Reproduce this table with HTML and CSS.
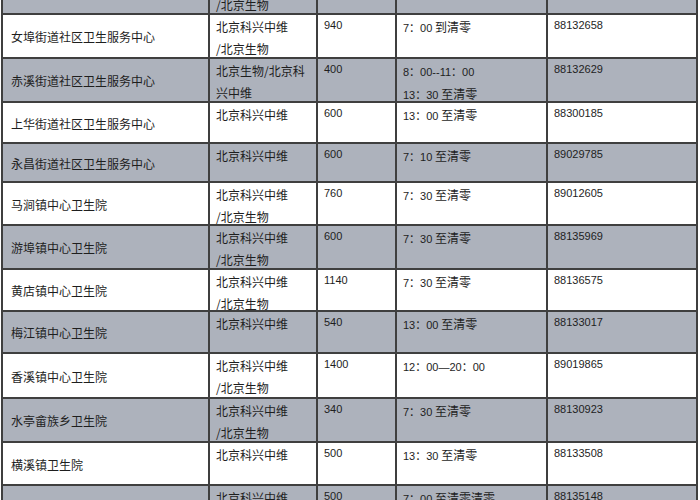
FILE: index.html
```html
<!DOCTYPE html>
<html lang="zh">
<head>
<meta charset="utf-8">
<title>接种点</title>
<link rel="stylesheet" href="styles.css">
</head>
<body>
<table class="sites">
  <colgroup>
    <col class="c-name"><col class="c-vac"><col class="c-num"><col class="c-time"><col class="c-tel">
  </colgroup>
  <tbody>
    <tr class="gray h44">
      <td class="name"></td>
      <td><div class="t">北京科兴中维<br>/北京生物</div></td>
      <td class="num"></td>
      <td></td>
      <td class="num"></td>
    </tr>
    <tr class="h44">
      <td class="name">女埠街道社区卫生服务中心</td>
      <td><div class="t">北京科兴中维<br>/北京生物</div></td>
      <td class="num"><div class="t">940</div></td>
      <td><div class="t"><span class="d">7：00</span> 到清零</div></td>
      <td class="num"><div class="t">88132658</div></td>
    </tr>
    <tr class="gray h44">
      <td class="name">赤溪街道社区卫生服务中心</td>
      <td><div class="t">北京生物/北京科<br>兴中维</div></td>
      <td class="num"><div class="t">400</div></td>
      <td><div class="t"><span class="d">8：00--11：00</span><br><span class="d">13：30</span> 至清零</div></td>
      <td class="num"><div class="t">88132629</div></td>
    </tr>
    <tr class="h41">
      <td class="name">上华街道社区卫生服务中心</td>
      <td><div class="t">北京科兴中维</div></td>
      <td class="num"><div class="t">600</div></td>
      <td><div class="t"><span class="d">13：00</span> 至清零</div></td>
      <td class="num"><div class="t">88300185</div></td>
    </tr>
    <tr class="gray h39">
      <td class="name">永昌街道社区卫生服务中心</td>
      <td><div class="t">北京科兴中维</div></td>
      <td class="num"><div class="t">600</div></td>
      <td><div class="t"><span class="d">7：10</span> 至清零</div></td>
      <td class="num"><div class="t">89029785</div></td>
    </tr>
    <tr class="h43">
      <td class="name">马涧镇中心卫生院</td>
      <td><div class="t">北京科兴中维<br>/北京生物</div></td>
      <td class="num"><div class="t">760</div></td>
      <td><div class="t"><span class="d">7：30</span> 至清零</div></td>
      <td class="num"><div class="t">89012605</div></td>
    </tr>
    <tr class="gray h44">
      <td class="name">游埠镇中心卫生院</td>
      <td><div class="t">北京科兴中维<br>/北京生物</div></td>
      <td class="num"><div class="t">600</div></td>
      <td><div class="t"><span class="d">7：30</span> 至清零</div></td>
      <td class="num"><div class="t">88135969</div></td>
    </tr>
    <tr class="h42">
      <td class="name">黄店镇中心卫生院</td>
      <td><div class="t">北京科兴中维<br>/北京生物</div></td>
      <td class="num"><div class="t">1140</div></td>
      <td><div class="t"><span class="d">7：30</span> 至清零</div></td>
      <td class="num"><div class="t">88136575</div></td>
    </tr>
    <tr class="gray h42">
      <td class="name">梅江镇中心卫生院</td>
      <td><div class="t">北京科兴中维</div></td>
      <td class="num"><div class="t">540</div></td>
      <td><div class="t"><span class="d">13：00</span> 至清零</div></td>
      <td class="num"><div class="t">88133017</div></td>
    </tr>
    <tr class="h45">
      <td class="name">香溪镇中心卫生院</td>
      <td><div class="t">北京科兴中维<br>/北京生物</div></td>
      <td class="num"><div class="t">1400</div></td>
      <td><div class="t"><span class="d">12：00—20：00</span></div></td>
      <td class="num"><div class="t">89019865</div></td>
    </tr>
    <tr class="gray h44">
      <td class="name">水亭畲族乡卫生院</td>
      <td><div class="t">北京科兴中维<br>/北京生物</div></td>
      <td class="num"><div class="t">340</div></td>
      <td><div class="t"><span class="d">7：30</span> 至清零</div></td>
      <td class="num"><div class="t">88130923</div></td>
    </tr>
    <tr class="h43">
      <td class="name">横溪镇卫生院</td>
      <td><div class="t">北京科兴中维</div></td>
      <td class="num"><div class="t">500</div></td>
      <td><div class="t"><span class="d">13：30</span> 至清零</div></td>
      <td class="num"><div class="t">88133508</div></td>
    </tr>
    <tr class="gray h44">
      <td class="name"></td>
      <td><div class="t">北京科兴中维<br>/北京生物</div></td>
      <td class="num"><div class="t">500</div></td>
      <td><div class="t"><span class="d">7：00</span> 至清零清零</div></td>
      <td class="num"><div class="t">88135148</div></td>
    </tr>
  </tbody>
</table>
</body>
</html>
```
FILE: styles.css
```css
html, body {
  margin: 0;
  padding: 0;
  background: #ffffff;
  overflow: hidden;
}

body {
  font-family: "Noto Sans CJK SC", "Liberation Sans", sans-serif;
  color: #1e1e1e;
}

.sites {
  border-collapse: collapse;
  table-layout: fixed;
  width: 695px;
  margin: -31px 0 0 1px;
}

.c-name { width: 207px; }
.c-vac { width: 108px; }
.c-num { width: 79px; }
.c-time { width: 151px; }
.c-tel { width: 150px; }

.sites td {
  border: 2px solid #3f3f3f;
  padding: 0 0 0 6px;
  vertical-align: top;
  font-size: 12px;
  line-height: 22px;
  white-space: nowrap;
  overflow: hidden;
}

.t {
  margin: 1px 0 -5px 0;
}

.sites td.name {
  vertical-align: middle;
  padding: 2px 0 0 8px;
}

.sites td.num {
  font-family: "Liberation Sans", sans-serif;
  font-size: 11px;
}

.sites td.num .t {
  margin-top: -1px;
  margin-bottom: -3px;
}

.d {
  font-family: "Liberation Sans", "Noto Sans CJK SC", sans-serif;
  font-size: 11px;
}

.gray td { background: #adb2bc; }

/* row pitch classes */
.h39 { height: 39px; }
.h41 { height: 41px; }
.h42 { height: 42px; }
.h43 { height: 43px; }
.h44 { height: 44px; }
.h45 { height: 45px; }
```
